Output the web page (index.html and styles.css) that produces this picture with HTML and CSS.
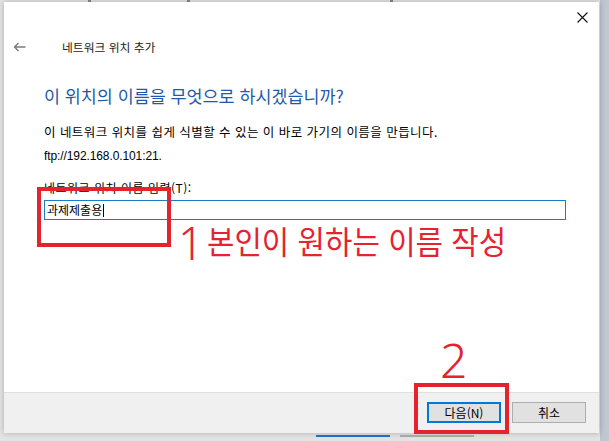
FILE: index.html
```html
<!DOCTYPE html>
<html lang="ko">
<head>
  <meta charset="UTF-8" />
  <meta name="viewport" content="width=device-width, initial-scale=1.0"/>
  <title>네트워크 위치 추가</title>
  <link rel="stylesheet" href="styles.css">
</head>
<body>
  <div class="desk">
    <div class="topmarks">
      <span class="mark m1"></span>
      <span class="mark m2"></span>
      <span class="mark m3"></span>
    </div>

    <div class="dialog">
      <div class="titlebar">
        <svg class="close" width="11" height="11" viewBox="0 0 11 11">
          <path d="M0.5 0.5 L10.5 10.5 M10.5 0.5 L0.5 10.5" stroke="#111" stroke-width="1.1" fill="none"/>
        </svg>
      </div>

      <div class="nav">
        <svg class="back" width="13" height="10" viewBox="0 0 13 10">
          <path d="M12.5 5 H1.5 M5.5 1 L1.5 5 L5.5 9" stroke="#7a7a7a" stroke-width="1.4" fill="none"/>
        </svg>
        <span class="nav-title">네트워크 위치 추가</span>
      </div>

      <div class="content">
        <h1 class="heading">이 위치의 이름을 무엇으로 하시겠습니까?</h1>
        <p class="desc">이 네트워크 위치를 쉽게 식별할 수 있는 이 바로 가기의 이름을 만듭니다.</p>
        <p class="addr">ftp://192.168.0.101:21.</p>
        <label class="field-label" for="name">네트워크 위치 이름 입력(T):</label>
        <div class="field" id="name">과제제출용<span class="caret"></span></div>
      </div>

      <div class="footer">
        <button class="btn btn-primary">다음(N)</button>
        <button class="btn">취소</button>
      </div>
    </div>

    <div class="taskbar">
      <span class="task task-active"></span>
      <span class="task"></span>
    </div>
  </div>

  <!-- 빨간 표시 -->
  <div class="box box1"></div>
  <span class="num num1">1</span>
  <span class="note">본인이 원하는 이름 작성</span>
  <span class="num num2">2</span>
  <div class="box box2"></div>
</body>
</html>
```

FILE: styles.css
```css
body {
  margin: 0;
  font-family: "Noto Sans CJK KR", "Noto Sans", sans-serif;
  color: #000;
  overflow: hidden;
}
.desk {
  position: relative;
  height: 441px;
  background: linear-gradient(to right, #e4e4e4 0, #e4e4e4 600px, #bcc3ce 600px, #c3c9d3 609px);
  padding: 2px 0 0 4px;
  box-sizing: border-box;
}
.topmarks {
  position: absolute;
  top: 0;
  left: 0;
  right: 0;
  height: 2px;
}
.mark {
  position: absolute;
  top: 0;
  width: 3px;
  height: 2px;
  background: #7c7c7c;
}
.m1 { left: 88px; }
.m2 { left: 187px; }
.m3 { left: 390px; }
.dialog {
  width: 595px;
  height: 431px;
  background: #fff;
  display: flex;
  flex-direction: column;
  box-shadow: 0 0 6px rgba(0,0,0,0.25);
}
.titlebar {
  height: 30px;
  display: flex;
  justify-content: flex-end;
  align-items: center;
  padding-right: 11px;
}
.close {
  margin-top: 1px;
}
.nav {
  height: 29px;
  display: flex;
  align-items: center;
  padding-left: 9px;
}
.back {
  margin-right: 36px;
}
.nav-title {
  font-size: 11.8px;
  color: #222;
}
.content {
  flex: 1;
  padding: 23px 33px 0 40px;
}
.heading {
  margin: 0;
  font-size: 17.4px;
  font-weight: normal;
  line-height: 24px;
  color: #1e5aa9;
}
.desc {
  margin: 15px 0 0;
  font-size: 12.5px;
  letter-spacing: 0.45px;
  line-height: 18px;
}
.addr {
  margin: 6px 0 0;
  font-family: "Liberation Sans", sans-serif;
  font-size: 12px;
  line-height: 18px;
  letter-spacing: -0.1px;
}
.field-label {
  display: block;
  margin-top: 14px;
  font-size: 12px;
  letter-spacing: 0.5px;
  line-height: 18px;
}
.field {
  margin-top: 3px;
  height: 18px;
  border: 1px solid #1a7cc4;
  font-size: 12px;
  line-height: 18px;
  padding-left: 2px;
  display: flex;
  align-items: center;
}
.caret {
  width: 1px;
  height: 13px;
  background: #000;
  margin-left: 1px;
}
.footer {
  height: 41px;
  border-top: 1px solid #dfdfdf;
  background: #f0f0f0;
  display: flex;
  justify-content: flex-end;
  gap: 11px;
  padding: 9px 13px 0 0;
  box-sizing: border-box;
  align-items: flex-start;
}
.btn {
  width: 74px;
  height: 21px;
  padding: 0;
  background: #e1e1e1;
  border: 1px solid #adadad;
  font-family: "Noto Sans CJK KR", sans-serif;
  font-size: 12px;
  color: #000;
}
.btn-primary {
  border: 2px solid #0078d7;
}
.taskbar {
  position: absolute;
  left: 0;
  right: 0;
  bottom: 0;
  height: 8px;
}
.task {
  position: absolute;
  top: 2px;
  left: 400px;
  width: 74px;
  height: 2px;
  background: #a8a8a8;
}
.task-active {
  left: 316px;
  background: #1f6fc0;
}
.box {
  position: absolute;
  border: 4px solid #e5232f;
  box-sizing: border-box;
}
.box1 {
  left: 37px;
  top: 187px;
  width: 134px;
  height: 60px;
}
.box2 {
  left: 414px;
  top: 383px;
  width: 95px;
  height: 51px;
}
.num {
  position: absolute;
  font-family: "Noto Sans", sans-serif;
  font-weight: 300;
  color: #e5232f;
  line-height: 1;
}
.num1 {
  left: 178px;
  top: 220px;
  font-size: 45px;
}
.num2 {
  left: 440px;
  top: 336px;
  font-size: 48px;
}
.note {
  position: absolute;
  left: 207px;
  top: 225px;
  font-size: 29.8px;
  line-height: 1;
  color: #e5232f;
  transform: scaleY(1.07);
  transform-origin: left top;
  white-space: nowrap;
}
```
